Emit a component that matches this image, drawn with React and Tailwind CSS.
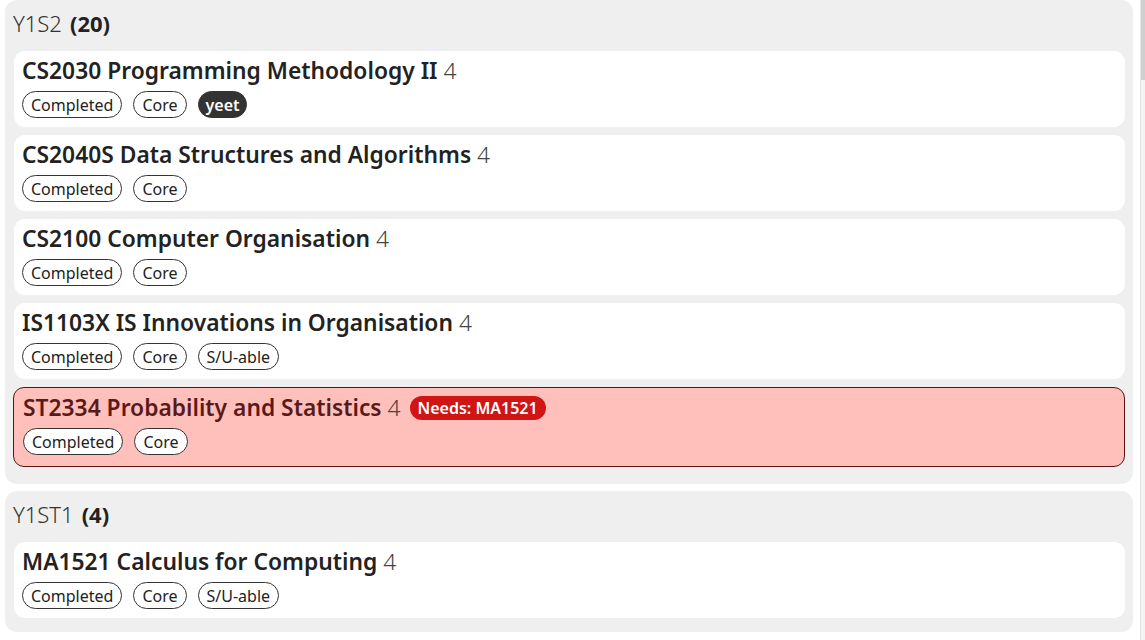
const semesters = [
  {
    name: 'Y1S2',
    credits: 20,
    modules: [
      { code: 'CS2030', title: 'Programming Methodology II', mc: 4, tags: ['Completed', 'Core'], custom: ['yeet'] },
      { code: 'CS2040S', title: 'Data Structures and Algorithms', mc: 4, tags: ['Completed', 'Core'] },
      { code: 'CS2100', title: 'Computer Organisation', mc: 4, tags: ['Completed', 'Core'] },
      { code: 'IS1103X', title: 'IS Innovations in Organisation', mc: 4, tags: ['Completed', 'Core', 'S/U-able'] },
      { code: 'ST2334', title: 'Probability and Statistics', mc: 4, tags: ['Completed', 'Core'], needs: 'MA1521' },
    ],
  },
  {
    name: 'Y1ST1',
    credits: 4,
    modules: [
      { code: 'MA1521', title: 'Calculus for Computing', mc: 4, tags: ['Completed', 'Core', 'S/U-able'] },
    ],
  },
]

function Tag({ label, dark }) {
  return (
    <span
      className={
        dark
          ? 'inline-flex h-[27px] items-center rounded-full border-[1.5px] border-[#333] bg-[#333] px-[7px] text-[16px] font-semibold text-white'
          : 'inline-flex h-[27px] items-center rounded-full border-[1.5px] border-[#333] bg-white px-[8px] text-[16px] text-[#222]'
      }
    >
      {label}
    </span>
  )
}

function ModuleCard({ mod }) {
  const blocked = !!mod.needs
  return (
    <div
      className={
        blocked
          ? 'ml-[-1px] rounded-[11px] border border-[#5a1414] bg-[#ffc0bc] px-[9px] pb-[11px] pt-[6px] text-[#5a1a1a]'
          : 'rounded-[11px] bg-white px-[8px] pb-[9px] pt-[6px] text-[#222]'
      }
    >
      <div className="flex h-[28px] items-center gap-[9px] text-[22.8px]">
        <span className="whitespace-nowrap">
          <span className="font-semibold">{mod.code} {mod.title}</span>{' '}
          <span className="font-light text-[#444]">{mod.mc}</span>
        </span>
        {blocked && (
          <span className="inline-flex h-[24px] items-center rounded-full bg-[#d11515] px-[8px] text-[16px] font-semibold text-white">
            Needs: {mod.needs}
          </span>
        )}
      </div>
      <div className="mt-[6px] flex gap-[11px]">
        {mod.tags.map(t => <Tag key={t} label={t} />)}
        {mod.custom && mod.custom.map(t => <Tag key={t} label={t} dark />)}
      </div>
    </div>
  )
}

export default function App() {
  return (
    <div
      className="flex h-[640px] w-[1145px] overflow-hidden bg-white"
      style={{ fontFamily: '"Noto Sans", "Open Sans", sans-serif' }}
    >
      <div className="flex w-[1140px] flex-col gap-[7px] pl-[5px] pr-[7px] pt-0">
        {semesters.map((sem, i) => (
          <div
            key={sem.name}
            className={
              i === 0
                ? 'rounded-[12px] bg-[#efefef] pb-[17px] pl-[9px] pr-[8px] pt-[8px]'
                : 'rounded-[12px] bg-[#efefef] pb-[14px] pl-[9px] pr-[8px] pt-[8px]'
            }
          >
            <div className="mb-[13px] flex h-[30px] items-center text-[22px] text-[#333]">
              <span className="ml-[-1px] font-light">{sem.name}</span>
              <span className="ml-[8px] font-bold text-[#222]">({sem.credits})</span>
            </div>
            <div className="flex flex-col gap-[8px]">
              {sem.modules.map(m => <ModuleCard key={m.code} mod={m} />)}
            </div>
          </div>
        ))}
      </div>
      <div className="flex w-[5px] flex-col bg-[#f3f3f3] border-l border-[#e4e4e4]">
        <div className="h-[80px] w-full bg-[#cfcfcf]" />
      </div>
    </div>
  )
}
